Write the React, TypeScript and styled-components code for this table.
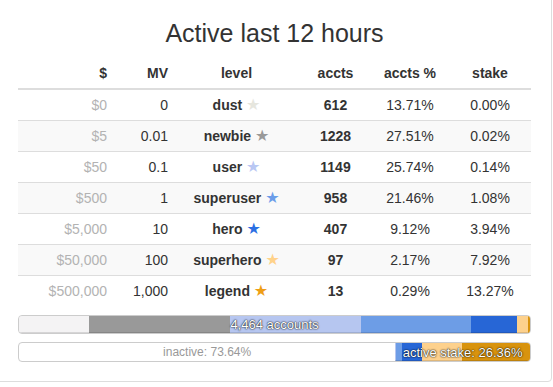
import styled, { createGlobalStyle } from 'styled-components';

const levels = [
    { usd: '$0', mv: '0', name: 'dust', star: '#e6e6de', bar: '#f4f3f4', accts: 612, pct: 13.71, stake: 0.0 },
    { usd: '$5', mv: '0.01', name: 'newbie', star: '#999999', bar: '#999999', accts: 1228, pct: 27.51, stake: 0.02 },
    { usd: '$50', mv: '0.1', name: 'user', star: '#b9c7f3', bar: '#b6c6f0', accts: 1149, pct: 25.74, stake: 0.14 },
    { usd: '$500', mv: '1', name: 'superuser', star: '#6b9de9', bar: '#6d9de6', accts: 958, pct: 21.46, stake: 1.08 },
    { usd: '$5,000', mv: '10', name: 'hero', star: '#2b6fe3', bar: '#2766d6', accts: 407, pct: 9.12, stake: 3.94 },
    { usd: '$50,000', mv: '100', name: 'superhero', star: '#ffd28a', bar: '#fdd18d', accts: 97, pct: 2.17, stake: 7.92 },
    { usd: '$500,000', mv: '1,000', name: 'legend', star: '#ee9e16', bar: '#d8930e', accts: 13, pct: 0.29, stake: 13.27 },
];

const totalAccts = 4464;
const activeStake = 26.36;

export default function App() {
    return (
        <Page>
            <GlobalStyle />
            <Panel>
                <Title>Active last 12 hours</Title>
                <Table>
                    <colgroup>
                        <col style={{ width: 94 }} />
                        <col style={{ width: 61 }} />
                        <col style={{ width: 127 }} />
                        <col style={{ width: 71 }} />
                        <col style={{ width: 78 }} />
                        <col style={{ width: 82 }} />
                    </colgroup>
                    <thead>
                        <tr>
                            <Th $align="right">$</Th>
                            <Th $align="right">MV</Th>
                            <Th>level</Th>
                            <Th>accts</Th>
                            <Th>accts %</Th>
                            <Th>stake</Th>
                        </tr>
                    </thead>
                    <tbody>
                        {levels.map((l) => (
                            <tr key={l.name}>
                                <Td $align="right" $muted>{l.usd}</Td>
                                <Td $align="right">{l.mv}</Td>
                                <Td $bold>
                                    {l.name} <Star $color={l.star}>★</Star>
                                </Td>
                                <Td $bold>{l.accts}</Td>
                                <Td>{l.pct.toFixed(2)}%</Td>
                                <Td>{l.stake.toFixed(2)}%</Td>
                            </tr>
                        ))}
                    </tbody>
                </Table>

                <Progress>
                    {levels.map((l) => (
                        <Segment key={l.name} $color={l.bar} style={{ width: `${(l.accts / totalAccts) * 100}%` }} />
                    ))}
                    <BarLabel>{totalAccts.toLocaleString('en-US')} accounts</BarLabel>
                </Progress>

                <StakeBar>
                    <Inactive style={{ width: `${100 - activeStake}%` }}>
                        inactive: {(100 - activeStake).toFixed(2)}%
                    </Inactive>
                    <Active>
                        {levels.filter((l) => l.stake > 0).map((l) => (
                            <Segment key={l.name} $color={l.bar} style={{ width: `${(l.stake / activeStake) * 100}%` }} />
                        ))}
                        <BarLabel>active stake: {activeStake.toFixed(2)}%</BarLabel>
                    </Active>
                </StakeBar>
            </Panel>
        </Page>
    );
}

const GlobalStyle = createGlobalStyle`
body {
    margin: 0;
    background: #fff;
    font-family: "Liberation Sans", Arial, sans-serif;
    font-size: 14px;
    color: #333;
}
`;

const Page = styled.div`
display: flow-root;
width: 553px;
height: 387px;
overflow: hidden;
`;

const Panel = styled.div`
box-sizing: border-box;
width: 562px;
height: 392px;
margin: -10px 0 0 -10px;
padding: 28px 20px 0 27px;
border: 1px solid #ddd;
border-radius: 4px;
background: #fff;
`;

const Title = styled.h3`
margin: 0 0 11px;
font-size: 25px;
font-weight: 400;
line-height: 28px;
text-align: center;
color: #333;
`;

const Table = styled.table`
width: 100%;
table-layout: fixed;
border-collapse: separate;
border-spacing: 0;
tbody tr:nth-child(even) {
    background: #f9f9f9;
}
tbody tr:first-child td {
    border-top: 0;
}
`;

const Th = styled.th<{ $align?: string }>`
padding: 5px;
line-height: 20px;
font-weight: 700;
text-align: ${(p) => p.$align || 'center'};
border-bottom: 2px solid #ddd;
`;

const Td = styled.td<{ $align?: string; $muted?: boolean; $bold?: boolean }>`
padding: 5px;
line-height: 20px;
border-top: 1px solid #ddd;
text-align: ${(p) => p.$align || 'center'};
font-weight: ${(p) => (p.$bold ? 700 : 400)};
color: ${(p) => (p.$muted ? '#b3b3b3' : '#333')};
white-space: nowrap;
`;

const Star = styled.span<{ $color: string }>`
font-family: "DejaVu Sans", sans-serif;
font-size: 16px;
line-height: 20px;
font-weight: 400;
color: ${(p) => p.$color};
`;

const Progress = styled.div`
position: relative;
box-sizing: border-box;
display: flex;
height: 19px;
margin-top: 9px;
border: 1px solid #ccc;
border-radius: 4px;
overflow: hidden;
background: #f5f5f5;
box-shadow: inset 0 1px 2px rgba(0, 0, 0, 0.1);
`;

const Segment = styled.div<{ $color: string }>`
flex: none;
height: 100%;
background: ${(p) => p.$color};
box-shadow: inset 0 -1px 0 rgba(0, 0, 0, 0.12);
`;

const BarLabel = styled.div`
position: absolute;
inset: 0;
display: flex;
align-items: center;
justify-content: center;
font-size: 13px;
color: #fff;
white-space: nowrap;
text-shadow: 0 0 2px rgba(0, 0, 0, 0.9), 0 0 1px rgba(0, 0, 0, 0.9);
`;

const StakeBar = styled.div`
box-sizing: border-box;
display: flex;
height: 20px;
margin-top: 8px;
border: 1px solid #ccc;
border-radius: 4px;
overflow: hidden;
background: #fff;
`;

const Inactive = styled.div`
flex: none;
display: flex;
align-items: center;
justify-content: center;
font-size: 12px;
color: #999;
white-space: nowrap;
`;

const Active = styled.div`
position: relative;
flex: 1;
display: flex;
`;
